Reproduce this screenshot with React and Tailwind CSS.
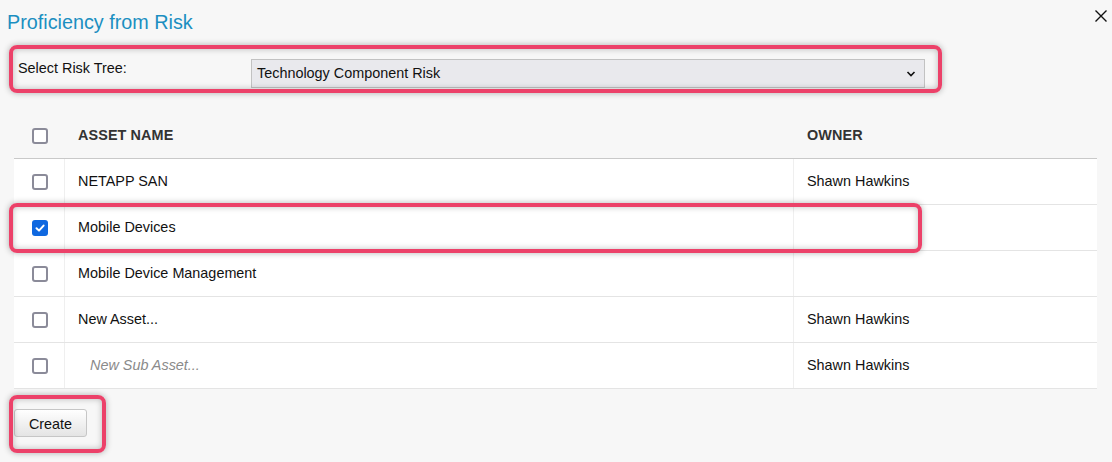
import React from "react";

const rows = [
  { name: "NETAPP SAN", owner: "Shawn Hawkins" },
  { name: "Mobile Devices", owner: "", checked: true },
  { name: "Mobile Device Management", owner: "" },
  { name: "New Asset...", owner: "Shawn Hawkins" },
  { name: "New Sub Asset...", owner: "Shawn Hawkins", sub: true },
];

function Checkbox({ checked }) {
  if (checked) {
    return (
      <div className="w-[16px] h-[16px] rounded-[3px] bg-[#0f68e0] flex items-center justify-center">
        <svg width="12" height="12" viewBox="0 0 12 12">
          <path d="M2.5 6.2 L5 8.6 L9.6 3.6" fill="none" stroke="#fff" strokeWidth="2" strokeLinecap="round" strokeLinejoin="round" />
        </svg>
      </div>
    );
  }
  return <div className="w-[16px] h-[16px] rounded-[3px] border-2 border-[#8b8b99] bg-white" />;
}

function Highlight({ className }) {
  return (
    <div
      className={`absolute pointer-events-none rounded-[8px] border-[4px] border-[#ec4169] shadow-[0_0_6px_rgba(0,0,0,0.3),inset_0_0_6px_rgba(0,0,0,0.25)] ${className}`}
    />
  );
}

export default function App() {
  return (
    <div className="relative w-[1112px] h-[462px] bg-[#f7f7f7] font-['Liberation_Sans',Arial,sans-serif] text-[#111] overflow-hidden">
      <div className="flex justify-between">
        <div className="pl-[7px] pt-[10px] text-[19.8px] leading-[24px] text-[#1b8fc1]">Proficiency from Risk</div>
        <div className="pt-[10px] pr-[5px]">
          <svg width="12" height="12" viewBox="0 0 12 12">
            <path d="M0.5 0.5 L11.5 11.5 M11.5 0.5 L0.5 11.5" stroke="#111" strokeWidth="1.4" />
          </svg>
        </div>
      </div>

      <div className="flex mt-[25px] pl-[18px]">
        <div className="w-[233px] mt-[1px] text-[14.4px] leading-[16px]">Select Risk Tree:</div>
        <div className="w-[674px] h-[29px] bg-[#e9e9ed] border border-[#c2c2c2] flex items-center justify-between pl-[5px] pr-[8px] text-[14.4px]">
          <span className="pt-[1px]">Technology Component Risk</span>
          <svg width="10" height="8" viewBox="0 0 10 8">
            <path d="M1.5 2 L5 5.5 L8.5 2" fill="none" stroke="#111" strokeWidth="1.6" />
          </svg>
        </div>
      </div>

      <div className="ml-[14px] mt-[25px] w-[1083px] text-[14.4px]">
        <div className="flex h-[46px] border-b border-[#c9c9c9] items-center">
          <div className="w-[50px] flex justify-center pl-[2px]">
            <Checkbox />
          </div>
          <div className="w-[729px] pl-[14px] font-bold tracking-[0.1px] text-[#333]">ASSET NAME</div>
          <div className="flex-1 pl-[14px] font-bold tracking-[0.1px] text-[#333]">OWNER</div>
        </div>
        {rows.map((r, i) => (
          <div key={i} className="flex h-[46px] bg-white border-b border-[#e4e4e4]">
            <div className="w-[50px] flex items-center justify-center pl-[2px]">
              <Checkbox checked={r.checked} />
            </div>
            <div className="w-[729px] border-l border-[#efefef] flex items-center pl-[13px] pt-[1px]">
              {r.sub ? (
                <span className="pl-[12px] italic text-[#8a8a8a]">{r.name}</span>
              ) : (
                <span>{r.name}</span>
              )}
            </div>
            <div className="flex-1 border-l border-[#efefef] flex items-center pl-[13px] pt-[1px]">{r.owner}</div>
          </div>
        ))}
      </div>

      <div className="ml-[14px] mt-[20px]">
        <button className="w-[73px] h-[28px] pt-[3px] rounded-[3px] border border-[#c6c6c6] bg-gradient-to-b from-white to-[#e4e4e4] text-[14.4px] text-[#111]">
          Create
        </button>
      </div>

      <Highlight className="left-[9px] top-[45px] w-[933px] h-[48px]" />
      <Highlight className="left-[9px] top-[203px] w-[913px] h-[50px]" />
      <Highlight className="left-[9px] top-[395px] w-[97px] h-[58px]" />
    </div>
  );
}
